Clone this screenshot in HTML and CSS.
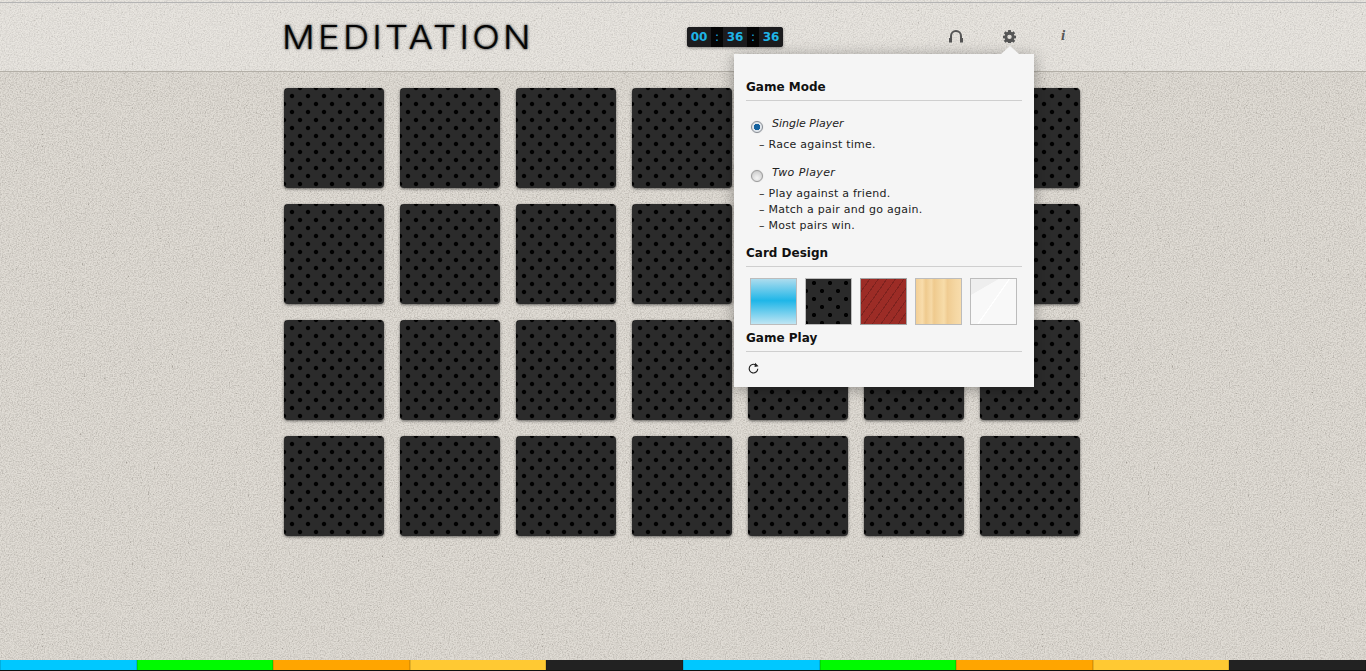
FILE: index.html
```html
<!DOCTYPE html>
<html lang="en">
<head>
<meta charset="utf-8">
<title>Meditation</title>
<link rel="stylesheet" href="styles.css">
</head>
<body>
<header class="header">
  <div class="wrap header-row">
    <div class="brand"><h1 class="logo">MEDITATION</h1></div>
    <div class="timer"><span class="tseg">00</span><span class="tsep">:</span><span class="tseg">36</span><span class="tsep">:</span><span class="tseg">36</span></div>
    <nav class="tools">
      <svg class="tool tool-head" width="16" height="14" viewBox="0 0 16 14"><path d="M3 12V7a5 5 0 0 1 10 0v5" fill="none" stroke="#555" stroke-width="2"/><rect x="1" y="9" width="3" height="4.500" fill="#555"/><rect x="12" y="9" width="3" height="4.500" fill="#555"/></svg>
      <svg class="tool tool-gear" width="13" height="13" viewBox="0 0 14 14"><path fill="#555" fill-rule="evenodd" d="M5.600 0h2.800l.3 2 1.200.5L11.500 1.400l1.600 2.100-1.400 1.400.3 1.100 2 .3v2.600l-2 .3-.3 1.100 1.400 1.400-1.600 2.100-1.600-1.100-1.200.5-.3 2H5.600l-.3-2-1.200-.5-1.600 1.100L.9 11.600l1.400-1.400L2 9.100l-2-.3V6.200l2-.3.300-1.100L.9 3.500l1.600-2.100 1.600 1.100 1.200-.5zM7 5a2.400 2.400 0 1 0 0 4.800A2.400 2.400 0 0 0 7 5z"/></svg>
      <span class="tool-info">i</span>
    </nav>
    <section class="popup">
      <h2 class="ptitle first">Game Mode</h2>
      <div class="mode mode-one">
        <label class="opt"><input class="radio" type="radio" name="mode" checked><em>Single Player</em></label>
        <p class="desc">– Race against time.</p>
      </div>
      <div class="mode">
        <label class="opt"><input class="radio" type="radio" name="mode"><em class="two">Two Player</em></label>
        <p class="desc">– Play against a friend.</p>
        <p class="desc">– Match a pair and go again.</p>
        <p class="desc">– Most pairs win.</p>
      </div>
      <h2 class="ptitle design">Card Design</h2>
      <div class="swatches">
        <span class="swatch s-blue"></span>
        <span class="swatch s-dots"></span>
        <span class="swatch s-red"></span>
        <span class="swatch s-wood"></span>
        <span class="swatch s-white"></span>
      </div>
      <h2 class="ptitle play">Game Play</h2>
      <svg class="refresh" width="13" height="13" viewBox="0 0 13 13"><path d="M10.800 6.800A4.300 4.300 0 1 1 8.800 3" fill="none" stroke="#222" stroke-width="1.100"/><path d="M7.800 1v4.200l3.900-1.200z" fill="#222" transform="rotate(8 9 3)"/></svg>
    </section>
  </div>
</header>
<main class="board">
  <div class="wrap grid">
    <div class="card"></div><div class="card"></div><div class="card"></div><div class="card"></div><div class="card"></div><div class="card"></div><div class="card"></div>
    <div class="card"></div><div class="card"></div><div class="card"></div><div class="card"></div><div class="card"></div><div class="card"></div><div class="card"></div>
    <div class="card"></div><div class="card"></div><div class="card"></div><div class="card"></div><div class="card"></div><div class="card"></div><div class="card"></div>
    <div class="card"></div><div class="card"></div><div class="card"></div><div class="card"></div><div class="card"></div><div class="card"></div><div class="card"></div>
  </div>
</main>
<footer class="bar">
  <i class="c1"></i><i class="c2"></i><i class="c3"></i><i class="c4"></i><i class="c5"></i>
  <i class="c1"></i><i class="c2"></i><i class="c3"></i><i class="c4"></i><i class="c5"></i>
</footer>
</body>
</html>
```
FILE: styles.css
```css
* { box-sizing: border-box; }
html, body { margin: 0; height: 100%; }
body {
  display: flex;
  flex-direction: column;
  overflow: hidden;
  font-family: "DejaVu Sans", sans-serif;
  color: #222;
  background-color: #e0dcd5;
  background-image: url("data:image/svg+xml,%3Csvg xmlns='http://www.w3.org/2000/svg' width='500' height='500'%3E%3Cfilter id='n'%3E%3CfeTurbulence type='fractalNoise' baseFrequency='.75' numOctaves='2' stitchTiles='stitch'/%3E%3CfeColorMatrix values='0 0 0 0 .3 0 0 0 0 .28 0 0 0 0 .25 .7 .7 0 0 -.58'/%3E%3C/filter%3E%3Cfilter id='s'%3E%3CfeTurbulence type='fractalNoise' baseFrequency='.5' numOctaves='1' seed='7' stitchTiles='stitch'/%3E%3CfeColorMatrix values='0 0 0 0 .25 0 0 0 0 .23 0 0 0 0 .2 3 3 0 0 -4'/%3E%3C/filter%3E%3Crect width='500' height='500' filter='url(%23n)'/%3E%3Crect width='500' height='500' filter='url(%23s)'/%3E%3C/svg%3E");
}
.wrap { width: 798px; margin: 0 auto; }

.header {
  height: 72px;
  flex: none;
  padding-top: 2px;
  background: rgba(255, 255, 255, .25);
  border-bottom: 1px solid #b3afa7;
}
.header::before {
  content: "";
  display: block;
  height: 1px;
  background: #b4b4b4;
}
.header-row {
  position: relative;
  display: flex;
  align-items: flex-start;
  height: 68px;
}
.brand { width: 403px; flex: none; }
.logo {
  margin: 15px 0 0 -2px;
  width: max-content;
  font: 300 33px/38px Inter, sans-serif;
  letter-spacing: 3px;
  color: #050505;
  text-shadow: 0 0 2px #444, 0 0 3px #777;
  transform: scaleX(1.1);
  transform-origin: left center;
}
.timer {
  display: flex;
  align-items: center;
  margin-top: 24px;
  height: 20px;
  border-radius: 3px;
  background: #1a1a1a;
  box-shadow: 0 1px 3px rgba(0, 0, 0, .4);
  overflow: hidden;
  font: 700 12px/20px "DejaVu Sans", sans-serif;
  color: #1fb4e6;
}
.tseg { width: 24px; text-align: center; background: #1c1c1e; }
.tsep { width: 12px; text-align: center; background: #050505; font-weight: 400; }
.tools { position: relative; flex: 1; height: 60px; }
.tool { position: absolute; top: 26px; display: block; }
.tool-head { left: 165px; }
.tool-gear { left: 220px; top: 27px; }
.tool-info {
  position: absolute;
  left: 278px;
  top: 23px;
  font: italic 700 15px/18px "Liberation Serif", serif;
  color: #555;
}

.popup {
  position: absolute;
  left: 450px;
  top: 51px;
  width: 300px;
  height: 333px;
  padding: 0 12px;
  background: #f5f5f5;
  box-shadow: 0 2px 14px rgba(0, 0, 0, .35);
  z-index: 5;
}
.popup::before {
  content: "";
  position: absolute;
  left: 267px;
  top: -8px;
  border: 9px solid transparent;
  border-top: 0;
  border-bottom: 8px solid #f5f5f5;
}
.ptitle {
  margin: 0;
  height: 22px;
  font: 700 12px/16px "DejaVu Sans", sans-serif;
  color: #111;
  border-bottom: 1px solid #cfcfcf;
}
.ptitle.first { margin-top: 25px; }
.mode-one { margin-top: 14px; height: 49px; }
.opt {
  display: flex;
  align-items: flex-start;
  height: 18px;
  font-size: 11px;
  line-height: 18px;
}
.opt em { margin-left: 9px; }
.opt em.two { letter-spacing: .4px; }
.radio {
  appearance: none;
  width: 12px;
  height: 12px;
  margin: 6px 0 0 5px;
  border-radius: 50%;
  border: 1px solid #999;
  background: radial-gradient(circle at 50% 70%, #f4f4f4, #c4c4c4);
  box-shadow: 0 0 1px #bbb;
}
.radio:checked {
  border-color: #868b92;
  background: radial-gradient(circle, #15629f 0 3px, #e2e7ec 3.500px);
}
.desc {
  margin: 0 0 0 13px;
  font-size: 11px;
  line-height: 16px;
  letter-spacing: .25px;
  color: #222;
}
.opt + .desc { margin-top: 4px; }
.ptitle.design { margin-top: 11px; }
.swatches { display: flex; gap: 8px; margin: 11px 0 0 4px; }
.swatch {
  display: block;
  width: 47px;
  height: 47px;
  border: 1px solid #bcbcbc;
}
.s-blue { background: linear-gradient(#acdcee, #1fb6e8 48%, #bfe5f3); }
.s-dots {
  background-color: #2a2a2a;
  background-image: radial-gradient(circle, #000 0 1.800px, transparent 2.400px), radial-gradient(circle, #000 0 1.800px, transparent 2.400px);
  background-size: 16px 16px;
  background-position: 0 -4px, 8px 4px;
}
.s-red {
  border-color: #a3a3a3;
  background: repeating-linear-gradient(-55deg, #9c2c26 0 6px, #7e221e 6px 7px);
}
.s-wood {
  background: linear-gradient(90deg, #f3cf95, #f8dcab 14%, #efca8e 22%, #f6d9a6 34%, #efca8e 40%, #f7dca9 62%, #f0cc92 70%, #f5d7a3 88%, #f8dcab);
}
.s-white {
  background:
    linear-gradient(150deg, #eeeeee 0 22%, transparent 23%),
    linear-gradient(125deg, transparent 49%, #fff 49.500% 51%, transparent 51.500%),
    #f8f8f8;
}
.ptitle.play { margin-top: 5px; }
.refresh { display: block; margin: 10px 0 0 1px; }

.board { flex: 1; padding-top: 16px; min-height: 0; }
.grid {
  display: grid;
  grid-template-columns: repeat(7, 100px);
  grid-auto-rows: 100px;
  gap: 16px;
}
.card {
  border-radius: 4px;
  background-color: #2b2b2b;
  background-image: radial-gradient(circle, #000 0 1.800px, rgba(0, 0, 0, .25) 2.300px, transparent 2.800px), radial-gradient(circle, #000 0 1.800px, rgba(0, 0, 0, .25) 2.300px, transparent 2.800px);
  background-size: 16px 16px;
  background-position: -8px -8px, 0 0;
  box-shadow: 0 1px 3px rgba(0, 0, 0, .55);
}

.bar { flex: none; display: flex; height: 11px; background: #111; padding-bottom: 1px; }
.bar i { flex: 1; display: block; border: 1px solid rgba(0, 0, 0, .12); border-width: 0 1px; }
.c1 { background: #00c8ff; }
.c2 { background: #00fa00; }
.c3 { background: #ffa500; }
.c4 { background: #ffc933; }
.c5 { background: #222; }
```
